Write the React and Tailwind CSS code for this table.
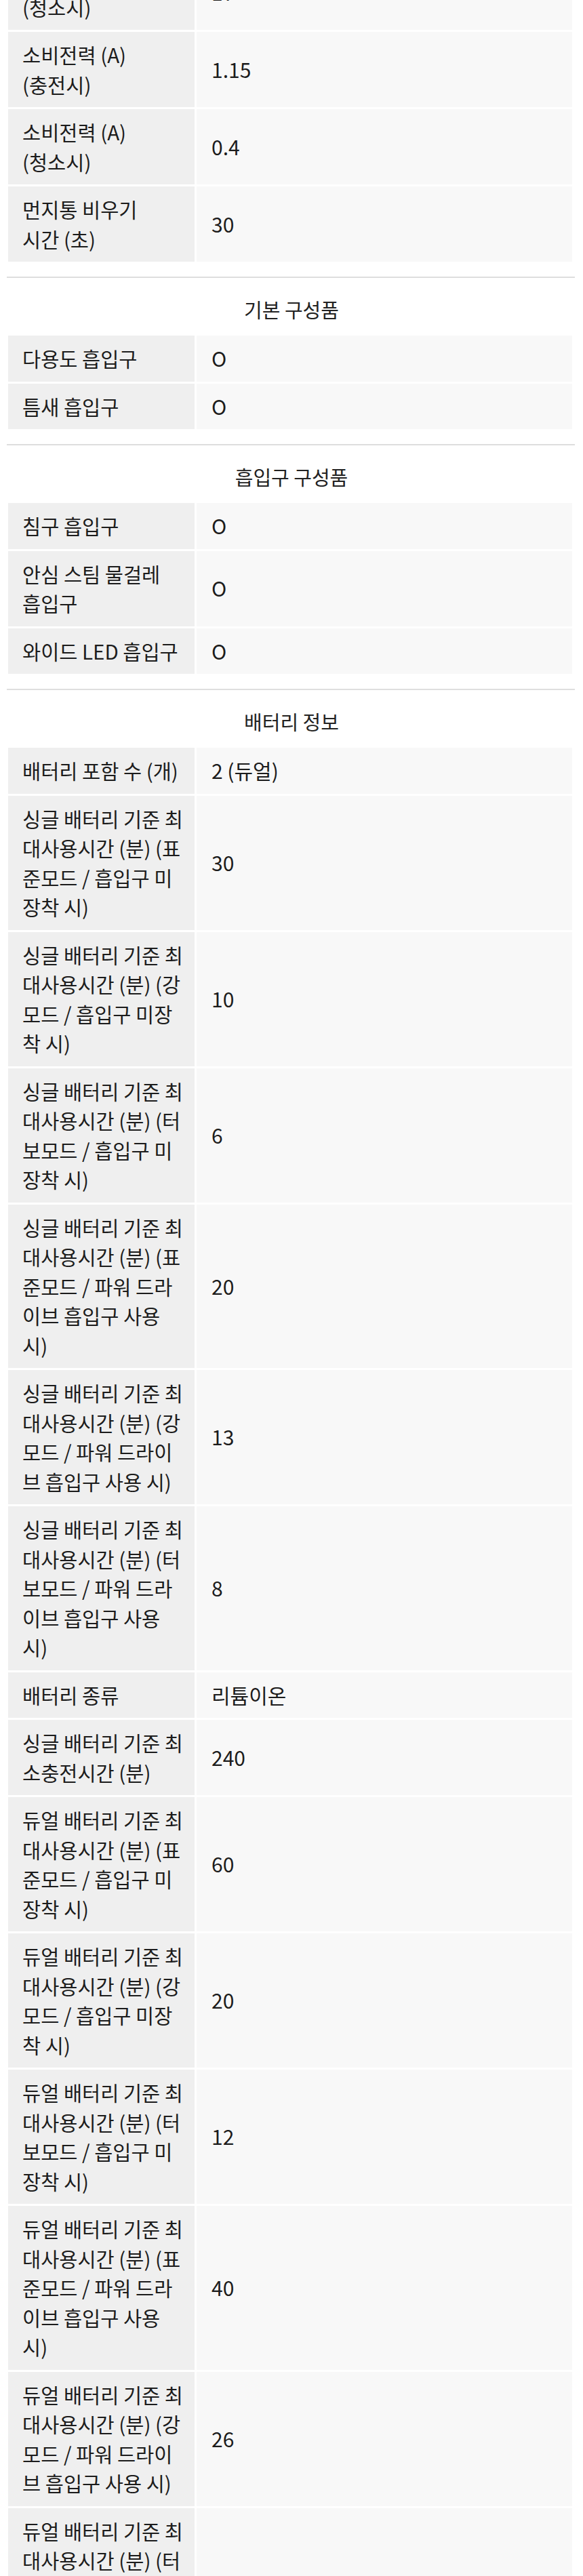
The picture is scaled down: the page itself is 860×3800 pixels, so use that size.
import React from "react";

const sections = [
  {
    title: null,
    rows: [
      ["소비전력 (W)\n(청소시)", "17"],
      ["소비전력 (A)\n(충전시)", "1.15"],
      ["소비전력 (A)\n(청소시)", "0.4"],
      ["먼지통 비우기\n시간 (초)", "30"],
    ],
  },
  {
    title: "기본 구성품",
    rows: [
      ["다용도 흡입구", "O"],
      ["틈새 흡입구", "O"],
    ],
  },
  {
    title: "흡입구 구성품",
    rows: [
      ["침구 흡입구", "O"],
      ["안심 스팀 물걸레\n흡입구", "O"],
      ["와이드 LED 흡입구", "O"],
    ],
  },
  {
    title: "배터리 정보",
    rows: [
      ["배터리 포함 수 (개)", "2 (듀얼)"],
      ["싱글 배터리 기준 최\n대사용시간 (분) (표\n준모드 / 흡입구 미\n장착 시)", "30"],
      ["싱글 배터리 기준 최\n대사용시간 (분) (강\n모드 / 흡입구 미장\n착 시)", "10"],
      ["싱글 배터리 기준 최\n대사용시간 (분) (터\n보모드 / 흡입구 미\n장착 시)", "6"],
      ["싱글 배터리 기준 최\n대사용시간 (분) (표\n준모드 / 파워 드라\n이브 흡입구 사용\n시)", "20"],
      ["싱글 배터리 기준 최\n대사용시간 (분) (강\n모드 / 파워 드라이\n브 흡입구 사용 시)", "13"],
      ["싱글 배터리 기준 최\n대사용시간 (분) (터\n보모드 / 파워 드라\n이브 흡입구 사용\n시)", "8"],
      ["배터리 종류", "리튬이온"],
      ["싱글 배터리 기준 최\n소충전시간 (분)", "240"],
      ["듀얼 배터리 기준 최\n대사용시간 (분) (표\n준모드 / 흡입구 미\n장착 시)", "60"],
      ["듀얼 배터리 기준 최\n대사용시간 (분) (강\n모드 / 흡입구 미장\n착 시)", "20"],
      ["듀얼 배터리 기준 최\n대사용시간 (분) (터\n보모드 / 흡입구 미\n장착 시)", "12"],
      ["듀얼 배터리 기준 최\n대사용시간 (분) (표\n준모드 / 파워 드라\n이브 흡입구 사용\n시)", "40"],
      ["듀얼 배터리 기준 최\n대사용시간 (분) (강\n모드 / 파워 드라이\n브 흡입구 사용 시)", "26"],
      ["듀얼 배터리 기준 최\n대사용시간 (분) (터\n보모드 / 파워 드라\n이브 흡입구 사용\n시)", "16"],
    ],
  },
];

function SpecTable({ rows, className = "" }) {
  return (
    <div className={`grid grid-cols-[275px_1fr] gap-[3px] ml-[12px] mr-[16px] ${className}`}>
      {rows.map(([label, value], idx) => (
        <React.Fragment key={idx}>
          <div className="bg-[#efefef] pl-[21px] pr-1 py-3 text-[29.5px] leading-[43.5px] whitespace-pre">
            {label}
          </div>
          <div className="bg-[#f8f8f8] pl-[22px] flex items-center text-[30px] leading-[43.5px]">
            {value}
          </div>
        </React.Fragment>
      ))}
    </div>
  );
}

export default function App() {
  return (
    <div className="bg-white min-h-screen overflow-hidden font-['Noto_Sans_CJK_KR','Noto_Sans',sans-serif] text-[#1c1c1c] font-normal pb-10">
      {sections.map((section, idx) =>
        section.title ? (
          <div key={idx}>
            <div className="mt-[22px] ml-[10px] mr-[12px] h-[2px] bg-[#dedede]" />
            <h3 className="pt-[25px] pb-[17px] text-center text-[29px] leading-[43px] text-[#222]">
              {section.title}
            </h3>
            <SpecTable rows={section.rows} />
          </div>
        ) : (
          <SpecTable key={idx} rows={section.rows} className="-mt-[67px]" />
        )
      )}
    </div>
  );
}
